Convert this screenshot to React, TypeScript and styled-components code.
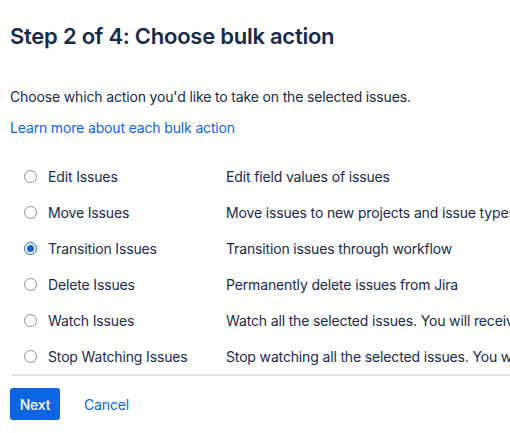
import React, { useState } from "react";
import styled, { createGlobalStyle } from "styled-components";

const Global = createGlobalStyle`
  html, body { margin: 0; padding: 0; background: #fff; overflow: hidden; }
  body { font-family: Inter, "Noto Sans", sans-serif; color: #172B4D; letter-spacing: -0.15px; }
`;

const Page = styled.div`
  padding: 22px 0 0 10px;
  width: 700px;
`;

const Heading = styled.h1`
  margin: 0;
  font-size: 22px;
  line-height: 28px;
  font-weight: 600;
  letter-spacing: -0.25px;
  color: #172B4D;
`;

const Intro = styled.p`
  margin: 37px 0 0;
  font-size: 14px;
  line-height: 20px;
`;

const Link = styled.a`
  display: block;
  margin-top: 11px;
  font-size: 14px;
  line-height: 20px;
  color: #0C66E4;
  text-decoration: none;
`;

const Options = styled.div`
  margin-top: 20px;
  margin-left: 2px;
  border-bottom: 2px solid #DFE1E6;
  display: grid;
  grid-template-columns: 36px 178px 1fr;
`;

const Row = styled.label`
  display: contents;
  cursor: pointer;
`;

const Cell = styled.div`
  height: 36px;
  display: flex;
  align-items: center;
  font-size: 14px;
  white-space: nowrap;
  color: #172B4D;
`;

const RadioCell = styled(Cell)`
  padding-left: 12px;
`;

const Radio = styled.span<{ $checked: boolean }>`
  box-sizing: border-box;
  width: 13px;
  height: 13px;
  border-radius: 50%;
  border: ${(p) => (p.$checked ? "1.5px solid #0C66E4" : "1px solid #8C8F94")};
  background: #fff;
  display: flex;
  align-items: center;
  justify-content: center;
  &::after {
    content: "";
    width: 7px;
    height: 7px;
    border-radius: 50%;
    background: ${(p) => (p.$checked ? "#0C66E4" : "transparent")};
  }
`;

const Actions = styled.div`
  display: flex;
  align-items: center;
  gap: 24px;
  margin-top: 12px;
`;

const Primary = styled.button`
  height: 32px;
  width: 50px;
  border: none;
  border-radius: 3px;
  background: #0C66E4;
  color: #fff;
  font-family: inherit;
  letter-spacing: inherit;
  font-size: 14px;
  font-weight: 500;
  padding: 0;
`;

const Subtle = styled.button`
  height: 32px;
  border: none;
  background: transparent;
  color: #0C66E4;
  font-family: inherit;
  letter-spacing: inherit;
  font-size: 14px;
  padding: 0;
`;

const options = [
  ["Edit Issues", "Edit field values of issues"],
  ["Move Issues", "Move issues to new projects and issue types"],
  ["Transition Issues", "Transition issues through workflow"],
  ["Delete Issues", "Permanently delete issues from Jira"],
  ["Watch Issues", "Watch all the selected issues. You will receive notifications when any of the issues are updated"],
  ["Stop Watching Issues", "Stop watching all the selected issues. You will no longer receive notifications"],
];

export default function App() {
  const [sel, setSel] = useState(2);
  return (
    <Page>
      <Global />
      <Heading>Step 2 of 4: Choose bulk action</Heading>
      <Intro>Choose which action you'd like to take on the selected issues.</Intro>
      <Link href="#">Learn more about each bulk action</Link>
      <Options>
        {options.map(([label, desc], i) => (
          <Row key={label} onClick={() => setSel(i)}>
            <RadioCell>
              <Radio $checked={sel === i} />
            </RadioCell>
            <Cell>{label}</Cell>
            <Cell>{desc}</Cell>
          </Row>
        ))}
      </Options>
      <Actions>
        <Primary>Next</Primary>
        <Subtle>Cancel</Subtle>
      </Actions>
    </Page>
  );
}
